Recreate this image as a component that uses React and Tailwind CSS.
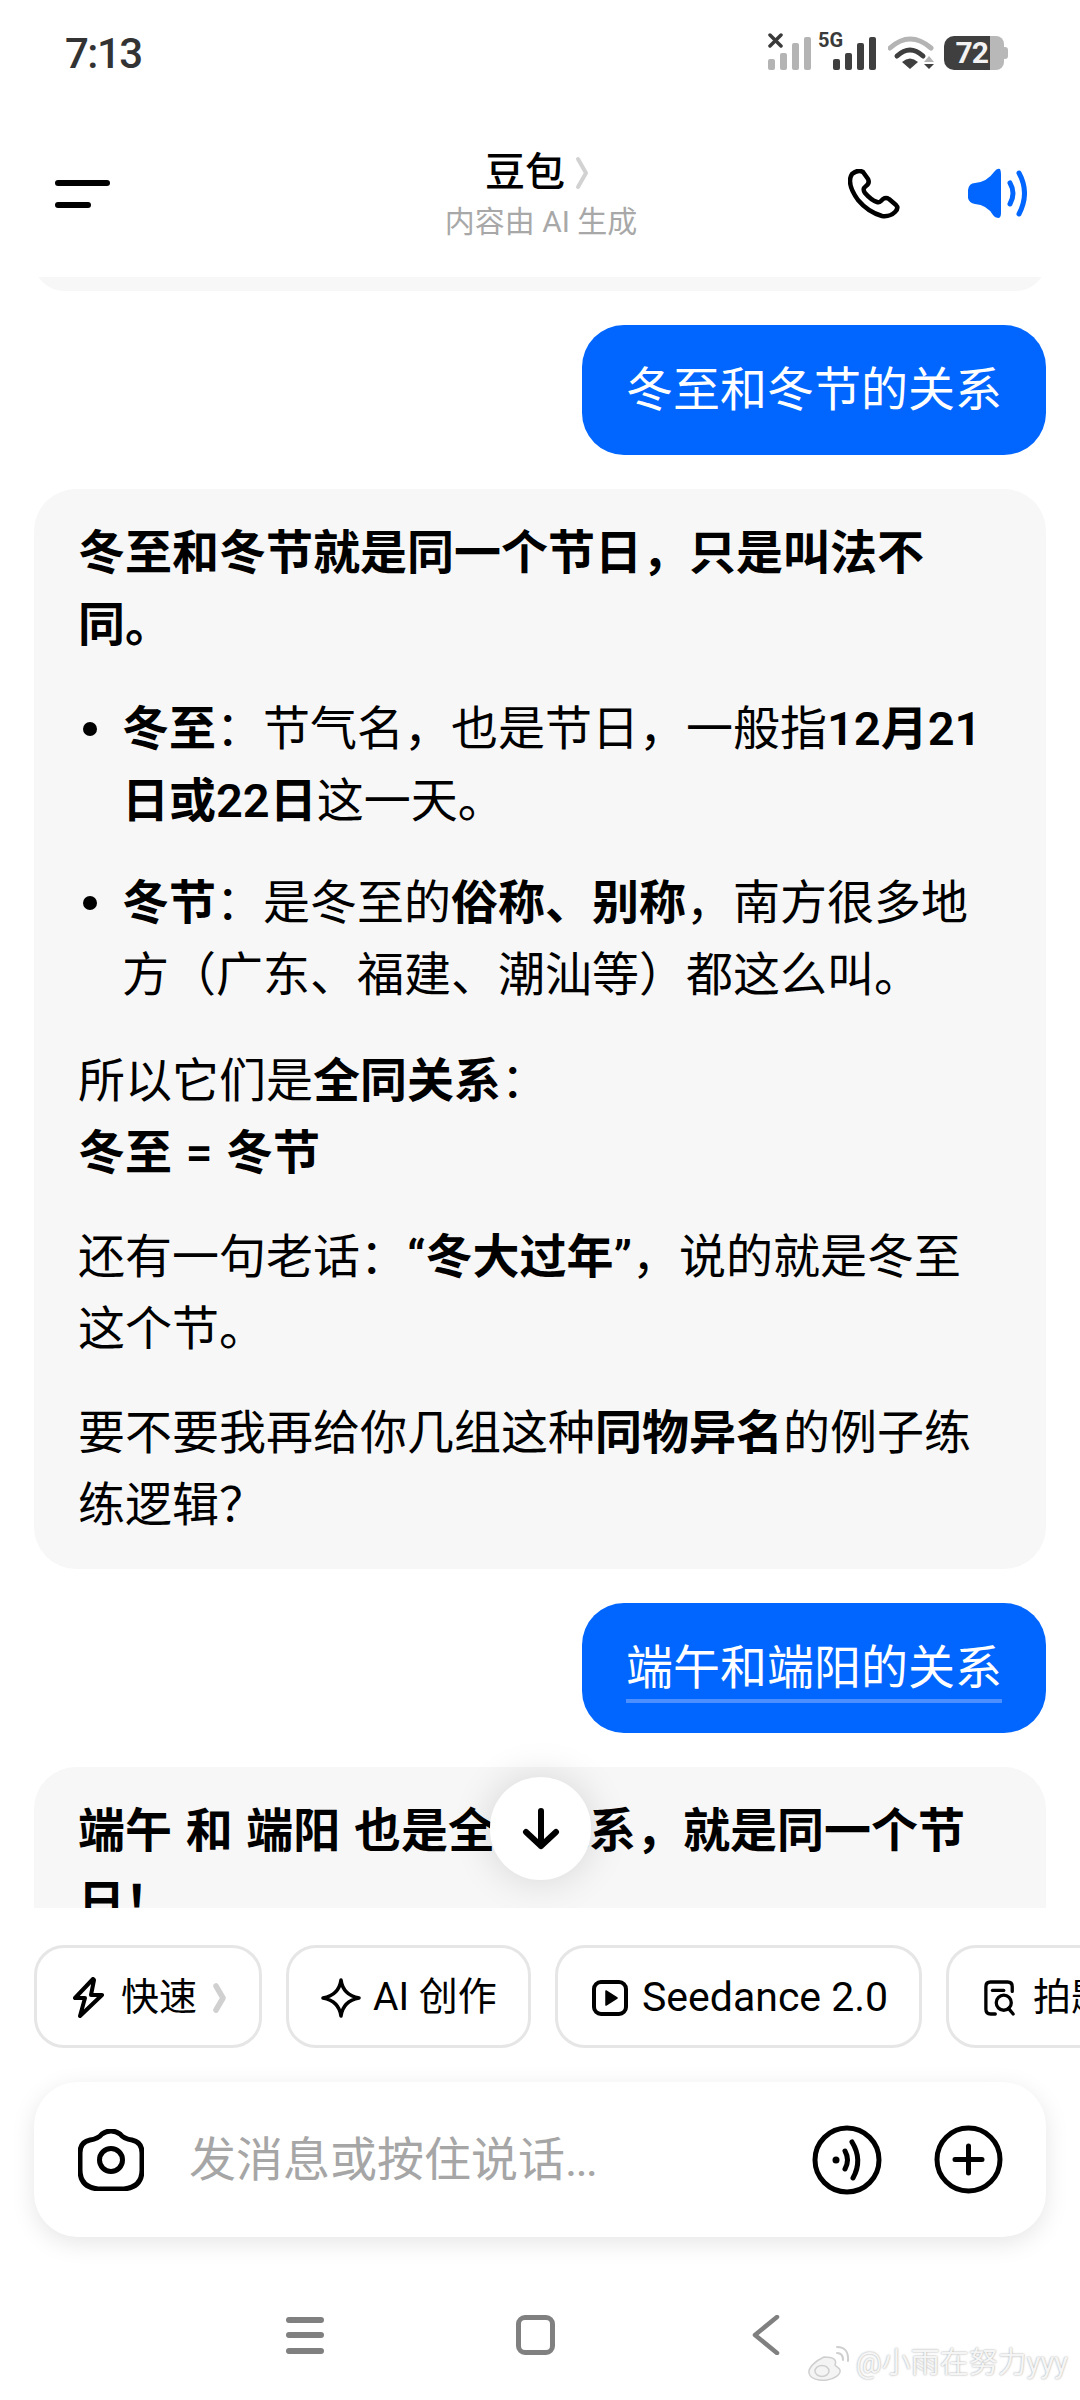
import clsx from 'clsx';

const FONT = 'font-["Roboto","Noto_Sans_CJK_SC",sans-serif]';

function Strong({ children }) {
  return <strong className="font-semibold">{children}</strong>;
}

function SignalBars({ tone }) {
  const heights = [11, 17, 27, 33];
  return (
    <div className="flex items-end gap-[5px] h-[33px]">
      {heights.map((h, i) => (
        <div key={i} className={clsx('w-[7px] rounded-[2px]', tone)} style={{ height: h }} />
      ))}
    </div>
  );
}

function StatusBar() {
  return (
    <div className="h-[100px] flex items-start justify-between pl-[65px] pr-[72px]">
      <span className="mt-[33px] text-[42px] leading-none font-medium tracking-[-1.5px] text-[#333333]">7:13</span>
      <div className="mt-[33px] flex items-end h-[37px]">
        <div className="relative w-[50px] h-[37px] flex items-end">
          <svg className="absolute left-0 top-0 w-[15px] h-[15px]" viewBox="0 0 15 15" fill="none">
            <path d="M2 2 L13 13 M13 2 L2 13" stroke="#3a3a3a" strokeWidth="3.5" strokeLinecap="round" />
          </svg>
          <SignalBars tone="bg-[#b4b4b4]" />
        </div>
        <div className="relative w-[58px] h-[37px] flex items-end justify-end">
          <span className="absolute left-0 top-0 text-[20px] leading-[15px] font-bold text-[#3a3a3a]">5G</span>
          <SignalBars tone="bg-[#3f3f3f]" />
        </div>
        <svg className="w-[48px] h-[34px] ml-[12px]" viewBox="0 0 48 34" fill="none">
          <path d="M2 12 Q22 -6 43 12" stroke="#b4b4b4" strokeWidth="5" strokeLinecap="round" />
          <path d="M9 20 Q22 8 35 20" stroke="#3f3f3f" strokeWidth="5" strokeLinecap="round" />
          <path d="M14 26 Q22 19 30 26 L22 33 Z" fill="#3f3f3f" />
          <path d="M41 20 L46 26 H36 Z" fill="#b4b4b4" />
          <path d="M36 28 H46 L41 33 Z" fill="#3f3f3f" />
        </svg>
        <div className="ml-[8px] w-[64px] h-[34px] flex">
          <div className="w-[46px] bg-[#3f3f3f] rounded-l-[10px] flex items-center justify-end">
            <span className="text-[30px] leading-none font-bold tracking-[-1px] text-[#f2f2f2] mr-[2px]">72</span>
          </div>
          <div className="w-[14px] bg-[#b8b8b8] rounded-r-[8px]" />
          <div className="w-[4px] h-[12px] bg-[#b8b8b8] rounded-r-[3px] self-center" />
        </div>
      </div>
    </div>
  );
}

function Header() {
  return (
    <div className="h-[177px] grid grid-cols-[1fr_auto_1fr] items-start pl-[55px] pr-[53px]">
      <div className="flex flex-col gap-[16px] pt-[80px]">
        <div className="w-[55px] h-[6px] rounded-full bg-black" />
        <div className="w-[36px] h-[6px] rounded-full bg-black" />
      </div>
      <div className="flex flex-col items-center pt-[48px]">
        <div className="flex items-center h-[50px] mr-[8px]">
          <span className="text-[40px] leading-none font-medium text-black">豆包</span>
          <svg className="w-[14px] h-[34px] ml-[10px]" viewBox="0 0 14 34" fill="none">
            <path d="M3 3 L11 17 L3 31" stroke="#d2d2d2" strokeWidth="4" strokeLinecap="round" strokeLinejoin="round" />
          </svg>
        </div>
        <span className="text-[30px] leading-[36px] mt-[6px] text-[#a8a8a8]">内容由 AI 生成</span>
      </div>
      <div className="flex justify-end items-center gap-[67px] pt-[68px]">
        <svg className="w-[52px] h-[50px]" viewBox="0 0 52 50" fill="none">
          <path
            d="M4 5 Q10 0 15 3 L20 10 Q22 14 18 17 L16 19 Q15 21 17 24 Q23 31 29 33 Q31 34 33 32 L35 30 Q38 28 41 30 L48 36 Q51 39 47 43 Q42 48 34 47 Q20 43 10 31 Q2 20 2 12 Q2 8 4 5 Z"
            stroke="#000"
            strokeWidth="4.5"
            strokeLinejoin="round"
          />
        </svg>
        <svg className="w-[60px] h-[51px]" viewBox="0 0 60 51" fill="none">
          <path
            d="M1 22 Q2 15 8 15 Q20 14 27 4 Q30 0 33 1 Q34 3 34 6 V45 Q34 49 32 50 Q28 50 26 47 Q20 37 8 36 Q2 35 1 30 Z"
            fill="#0066ff"
          />
          <path d="M43 15 Q49 25 43 36" stroke="#0066ff" strokeWidth="5" strokeLinecap="round" />
          <path d="M52 5 Q63 25 52 46" stroke="#0066ff" strokeWidth="5" strokeLinecap="round" />
        </svg>
      </div>
    </div>
  );
}

function UserBubble({ children }) {
  return (
    <div className="flex justify-end">
      <div className="h-[130px] px-[44px] flex items-center bg-[#0066ff] rounded-[42px] text-white">
        {children}
      </div>
    </div>
  );
}

function Bullet({ children }) {
  return (
    <li className="flex">
      <span className="w-[14px] h-[14px] mt-[29px] ml-[5px] mr-[25px] rounded-full bg-black shrink-0" />
      <div>{children}</div>
    </li>
  );
}

function Chat() {
  return (
    <div className="relative h-[1631px] overflow-hidden">
      <div className="px-[34px] flex flex-col gap-[34px] text-[47px] leading-[72px] text-black">
        <div className="h-[60px] -mt-[46px] bg-[#f7f7f7] rounded-[42px]" />
        <UserBubble>冬至和冬节的关系</UserBubble>

        <div className="bg-[#f7f7f7] rounded-[42px] pl-[44px] pr-[48px] py-[28px] flex flex-col gap-[32px]">
          <p className="font-semibold">冬至和冬节就是同一个节日，只是叫法不同。</p>
          <ul className="flex flex-col gap-[30px]">
            <Bullet>
              <Strong>冬至</Strong>：节气名，也是节日，一般指<Strong>12月21日或22日</Strong>这一天。
            </Bullet>
            <Bullet>
              <Strong>冬节</Strong>：是冬至的<Strong>俗称、别称</Strong>，南方很多地方（广东、福建、潮汕等）都这么叫。
            </Bullet>
          </ul>
          <p className="mt-[2px] [word-spacing:2px]">
            所以它们是<Strong>全同关系</Strong>：
            <br />
            <Strong>冬至 = 冬节</Strong>
          </p>
          <p>
            还有一句老话：<Strong>“冬大过年”</Strong>，说的就是冬至这个节。
          </p>
          <p>
            要不要我再给你几组这种<Strong>同物异名</Strong>的例子练练逻辑？
          </p>
        </div>

        <UserBubble>
          <span className="border-b-[4px] border-[#4d8fff] leading-[62px] h-[66px] mt-[4px]">端午和端阳的关系</span>
        </UserBubble>

        <div className="bg-[#f7f7f7] rounded-[42px] pl-[44px] pr-[48px] py-[28px] font-semibold [word-spacing:2px]">
          端午 和 端阳 也是全同关系，就是同一个节日！
        </div>
      </div>

      <div className="absolute left-[490px] top-[1500px] w-[101px] h-[103px] rounded-full bg-white shadow-[0_0_40px_rgba(0,0,0,0.14)] flex items-center justify-center">
        <svg className="w-[38px] h-[42px]" viewBox="0 0 38 42" fill="none">
          <path d="M19 3 V38 M4 24 L19 38 L34 24" stroke="#000" strokeWidth="6" strokeLinecap="round" strokeLinejoin="round" />
        </svg>
      </div>
    </div>
  );
}

function Chip({ className, children }) {
  return (
    <div className={clsx('h-[103px] shrink-0 flex items-center pt-[2px] rounded-[30px] border-[3px] border-[#e6e6e6] bg-white text-[38px] text-black', className)}>
      {children}
    </div>
  );
}

function ChipRow() {
  return (
    <div className="mt-[37px] flex gap-[24px] pl-[34px] overflow-hidden">
      <Chip className="pl-[36px] pr-[30px] w-[228px]">
        <svg className="w-[31px] h-[41px] shrink-0" viewBox="0 0 31 41" fill="none">
          <path d="M20 2 L2 21 H12 L7 39 L29 18 H18 L21 3 Z" stroke="#000" strokeWidth="4" strokeLinejoin="round" />
        </svg>
        <span className="ml-[17px]">快速</span>
        <svg className="w-[13px] h-[30px] ml-[16px] shrink-0" viewBox="0 0 13 30" fill="none">
          <path d="M3 3 L10 15 L3 27" stroke="#d0d0d0" strokeWidth="5.5" strokeLinecap="round" strokeLinejoin="round" />
        </svg>
      </Chip>
      <Chip className="pl-[32px] pr-[30px] w-[245px]">
        <svg className="w-[40px] h-[40px] shrink-0" viewBox="0 0 40 40" fill="none">
          <path d="M20 2 Q22 17 38 20 Q22 23 20 38 Q18 23 2 20 Q18 17 20 2 Z" stroke="#000" strokeWidth="3.5" strokeLinejoin="round" />
        </svg>
        <span className="ml-[12px] text-[39px] whitespace-nowrap">AI 创作</span>
      </Chip>
      <Chip className="pl-[34px] pr-[31px] w-[367px]">
        <svg className="w-[36px] h-[36px] shrink-0" viewBox="0 0 36 36" fill="none">
          <rect x="2" y="2" width="32" height="32" rx="7" stroke="#000" strokeWidth="4" />
          <path d="M14 11 L25 18 L14 25 Z" fill="#000" stroke="#000" strokeWidth="1.5" strokeLinejoin="round" />
        </svg>
        <span className="ml-[14px] text-[41px] whitespace-nowrap">Seedance 2.0</span>
      </Chip>
      <Chip className="pl-[35px] pr-[31px]">
        <svg className="w-[32px] h-[38px] shrink-0" viewBox="0 0 34 38" fill="none">
          <path d="M12 36 H7 Q2 36 2 31 V7 Q2 2 7 2 H25 Q30 2 30 7 V12" stroke="#000" strokeWidth="3.5" strokeLinecap="round" />
          <path d="M9 11 H21" stroke="#000" strokeWidth="3.5" strokeLinecap="round" />
          <circle cx="21" cy="24" r="8" stroke="#000" strokeWidth="3.5" />
          <path d="M26 30 L31 36" stroke="#000" strokeWidth="3.5" strokeLinecap="round" />
        </svg>
        <span className="ml-[17px] whitespace-nowrap">拍题答疑</span>
      </Chip>
    </div>
  );
}

function InputBar() {
  return (
    <div className="mt-[34px] mx-[34px] h-[155px] rounded-[44px] bg-white shadow-[0_6px_24px_rgba(0,0,0,0.1)] flex items-center pl-[44px] pr-[43px]">
      <svg className="w-[66px] h-[62px] shrink-0" viewBox="0 0 66 62" fill="none">
        <path
          d="M12 11 Q20 10 24 5 Q28 2 33 2 Q38 2 42 5 Q46 10 54 11 Q64 13 64 24 V41 Q64 58 46 60 H20 Q2 58 2 41 V24 Q2 13 12 11 Z"
          stroke="#000"
          strokeWidth="5"
          strokeLinejoin="round"
        />
        <circle cx="33" cy="31" r="11.5" stroke="#000" strokeWidth="5" />
      </svg>
      <span className="ml-[45px] text-[47px] leading-none text-[#a6a6a6]">
        发消息或按住说话<span className="tracking-[-2px]">...</span>
      </span>
      <svg className="w-[70px] h-[70px] ml-auto" viewBox="0 0 70 70" fill="none">
        <circle cx="35" cy="35" r="32" stroke="#000" strokeWidth="5" />
        <circle cx="24" cy="35" r="3.5" fill="#000" />
        <path d="M33 26 Q38 35 33 44" stroke="#000" strokeWidth="5" strokeLinecap="round" />
        <path d="M40 17 Q51 35 41 53" stroke="#000" strokeWidth="5" strokeLinecap="round" />
      </svg>
      <svg className="w-[69px] h-[69px] ml-[52px]" viewBox="0 0 69 69" fill="none">
        <circle cx="34.5" cy="34.5" r="31.5" stroke="#000" strokeWidth="5" />
        <path d="M34.5 21 V48 M21 34.5 H48" stroke="#000" strokeWidth="5" strokeLinecap="round" />
      </svg>
    </div>
  );
}

function NavBar() {
  return (
    <div className="relative h-[163px]">
      <div className="flex items-center justify-center pt-[78px] pr-[14px]">
        <div className="w-[38px] h-[37px] flex flex-col justify-between">
          <div className="h-[6px] rounded-full bg-[#808080]" />
          <div className="h-[6px] rounded-full bg-[#808080]" />
          <div className="h-[6px] rounded-full bg-[#808080]" />
        </div>
        <div className="w-[39px] h-[40px] ml-[192px] rounded-[9px] border-[5px] border-[#808080]" />
        <svg className="w-[28px] h-[40px] ml-[197px]" viewBox="0 0 28 40" fill="none">
          <path d="M25 2 L3 20 L25 38" stroke="#808080" strokeWidth="4.5" strokeLinecap="round" strokeLinejoin="round" />
        </svg>
      </div>
      <div className="absolute right-[12px] top-[108px] flex items-center gap-[6px]">
        <svg className="w-[43px] h-[37px]" viewBox="0 0 43 37" fill="none">
          <path d="M17 12 C8 16 1 23 2 28 C3 34 12 36 20 35 C28 34 34 29 33 25 C32 22 28 21 28 20 C30 15 27 12 17 12 Z" fill="#f4f4f4" stroke="#cfcfcf" strokeWidth="1.5" />
          <ellipse cx="15" cy="26" rx="7" ry="5.5" stroke="#cfcfcf" strokeWidth="1.5" />
          <path d="M30 8 Q36 8 36 15 M30 2 Q42 2 41 16" stroke="#cfcfcf" strokeWidth="2" strokeLinecap="round" />
        </svg>
        <span className="text-[29px] leading-none text-[#f5f5f5] [text-shadow:0_0_2px_rgba(0,0,0,0.4)]">@小雨在努力yyy</span>
      </div>
    </div>
  );
}

export default function App() {
  return (
    <div className={clsx('w-[1080px] h-[2400px] bg-white overflow-hidden', FONT)}>
      <StatusBar />
      <Header />
      <Chat />
      <ChipRow />
      <InputBar />
      <NavBar />
    </div>
  );
}
